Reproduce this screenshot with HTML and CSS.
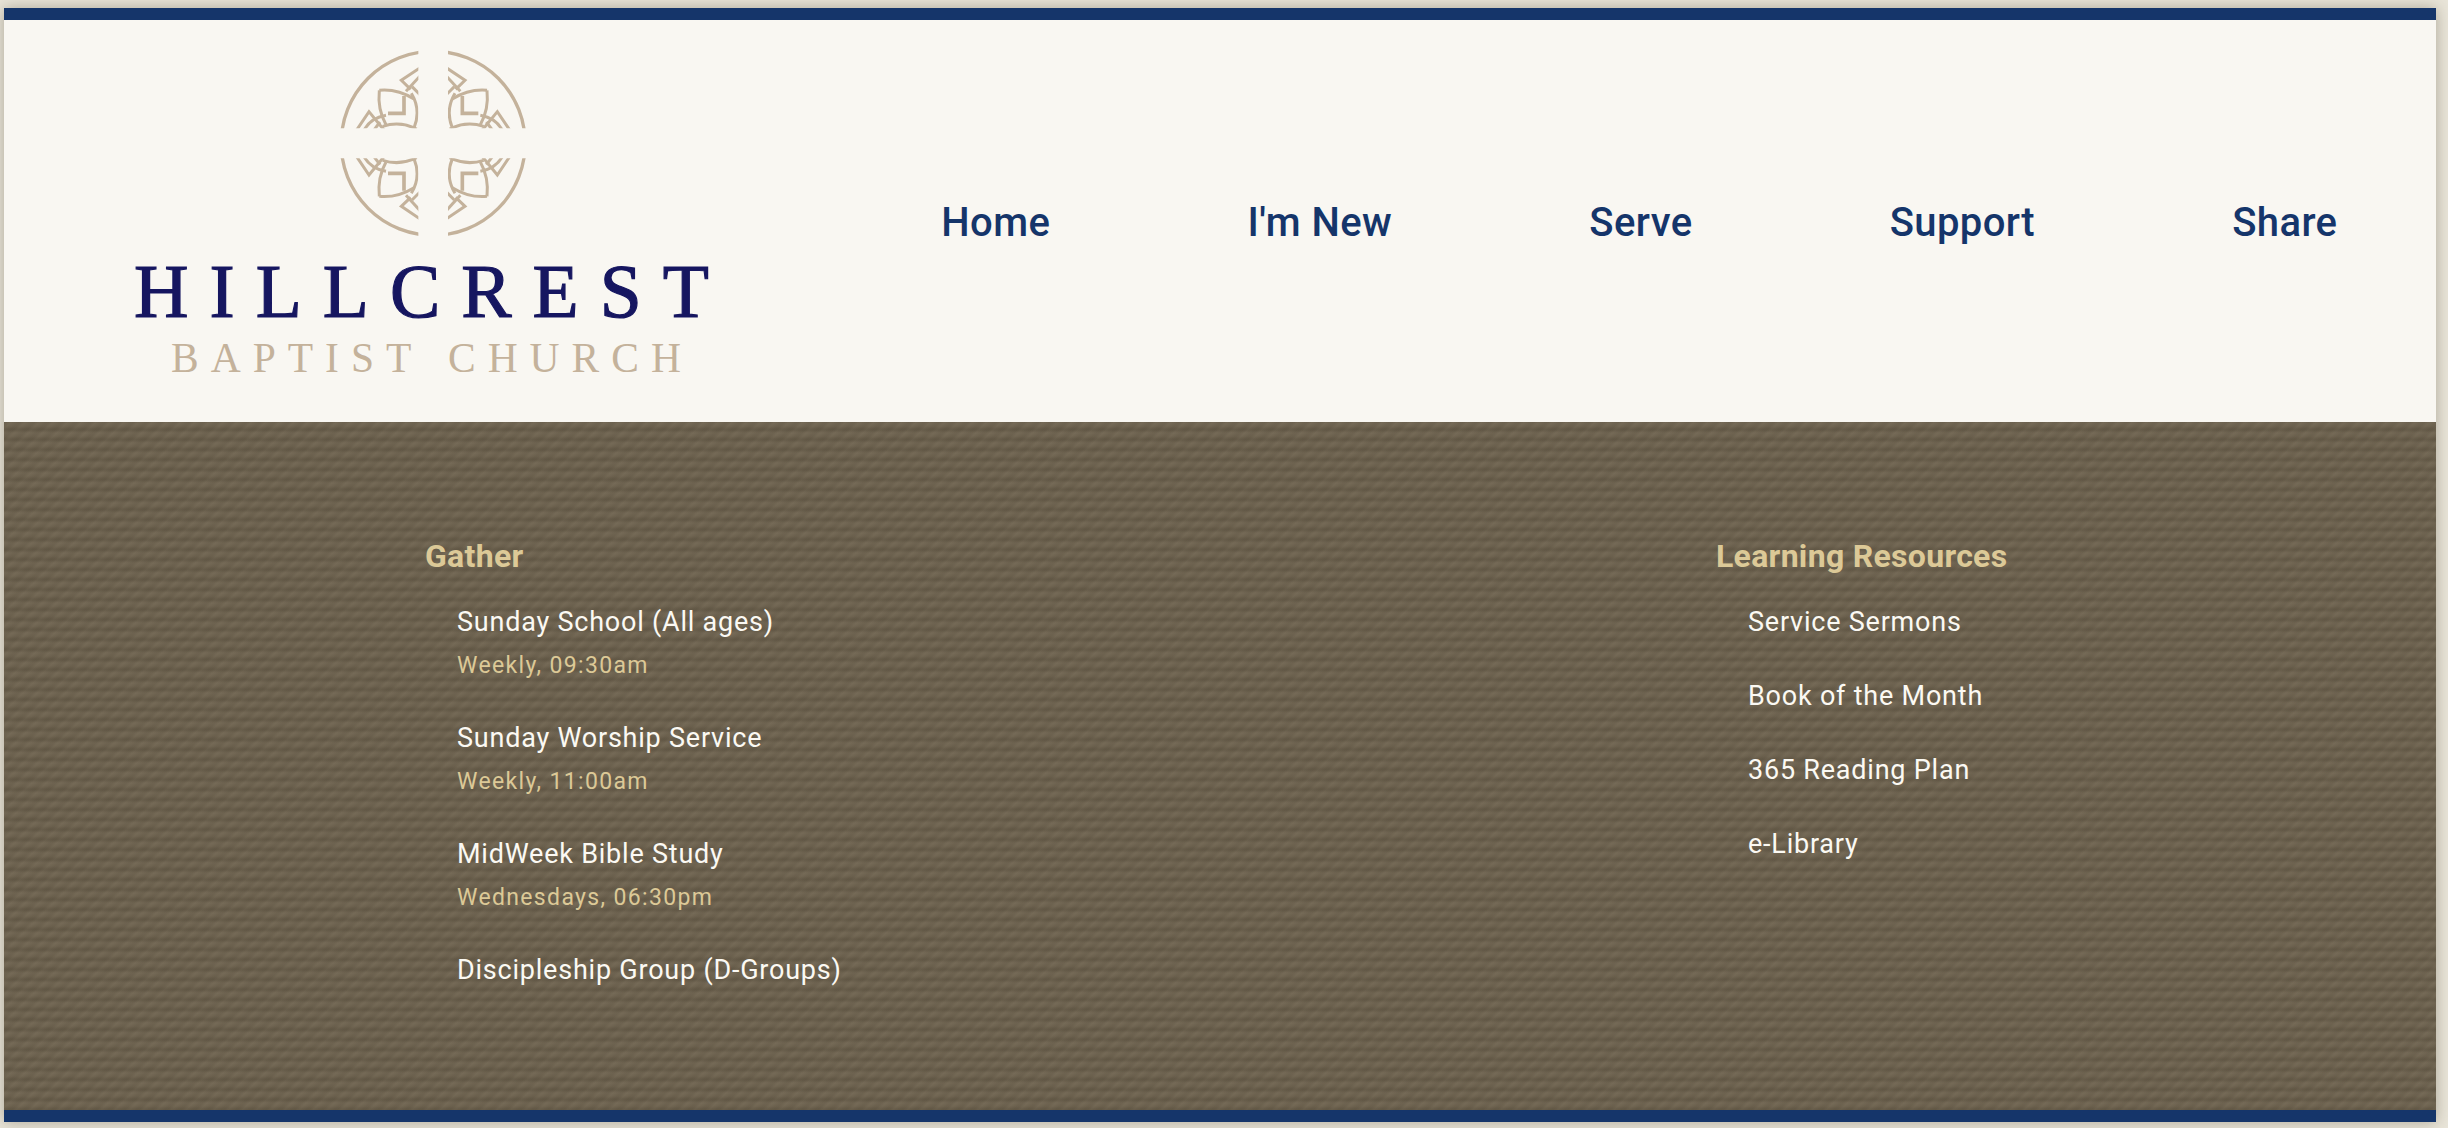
FILE: index.html
```html
<!DOCTYPE html>
<html lang="en">
<head>
<meta charset="utf-8">
<title>Hillcrest Baptist Church</title>
<link rel="stylesheet" href="styles.css">
</head>
<body>
<div class="frame">
  <header class="masthead">
    <a class="logo" href="#">
      <svg class="emblem" viewBox="0 0 840 660" width="280" height="220" aria-hidden="true">
        <defs>
          <clipPath id="q"><rect x="0" y="0" width="355" height="295"/></clipPath>
          <g id="quad" clip-path="url(#q)" fill="none" stroke="#c4b29b" stroke-width="9">
            <circle cx="399.5" cy="340" r="276" stroke-width="10"/>
            <path d="M238 181Q292 176 342 207"/>
            <path d="M238 181Q232 238 258 284"/>
            <path d="M312 198V250H264" stroke-width="11"/>
            <path d="M248 289Q300 272 350 297"/>
            <path d="M334 190Q364 240 342 294"/>
            <path d="M362 112L304 151L332 178"/>
            <path d="M362 136L318 184"/>
            <path d="M336 170L360 194"/>
            <path d="M170 300L207 245L252 300"/>
            <path d="M192 300Q212 264 258 256"/>
            <path d="M222 300L240 276"/>
          </g>
        </defs>
        <use href="#quad"/>
        <use href="#quad" transform="matrix(-1 0 0 1 799 0)"/>
        <use href="#quad" transform="matrix(1 0 0 -1 0 680)"/>
        <use href="#quad" transform="matrix(-1 0 0 -1 799 680)"/>
      </svg>
      <span class="logo-name">HILLCREST</span>
      <span class="logo-sub">BAPTIST CHURCH</span>
    </a>
    <nav class="nav">
      <a href="#">Home</a>
      <a href="#">I'm New</a>
      <a href="#">Serve</a>
      <a href="#">Support</a>
      <a href="#">Share</a>
    </nav>
  </header>
  <section class="lower">
    <div class="col">
      <h2>Gather</h2>
      <ul class="list list-events">
        <li><a href="#">Sunday School (All ages)</a><small>Weekly, 09:30am</small></li>
        <li><a href="#">Sunday Worship Service</a><small>Weekly, 11:00am</small></li>
        <li><a href="#">MidWeek Bible Study</a><small>Wednesdays, 06:30pm</small></li>
        <li><a href="#">Discipleship Group (D-Groups)</a></li>
      </ul>
    </div>
    <div class="col">
      <h2>Learning Resources</h2>
      <ul class="list list-links">
        <li><a href="#">Service Sermons</a></li>
        <li><a href="#">Book of the Month</a></li>
        <li><a href="#">365 Reading Plan</a></li>
        <li><a href="#">e-Library</a></li>
      </ul>
    </div>
  </section>
</div>
</body>
</html>
```
FILE: styles.css
```css
html, body { height: 100%; }
html { overflow: hidden; }
body {
  margin: 0;
  padding: 8px 12px 6px 4px;
  box-sizing: border-box;
  background: #e9e5d9;
  font-family: Roboto, sans-serif;
}
.frame {
  height: 1114px;
  display: flex;
  flex-direction: column;
  border-top: 12px solid #15356a;
  border-bottom: 12px solid #15356a;
  box-sizing: border-box;
  box-shadow: 0 0 14px rgba(60, 50, 30, .35);
}
.masthead {
  height: 402px;
  flex: none;
  display: flex;
  background: #f9f7f2;
}
.logo {
  display: flex;
  flex-direction: column;
  align-items: flex-start;
  padding: 10px 0 0 130px;
  font-family: "Liberation Serif", serif;
  text-decoration: none;
}
.emblem { display: block; margin: 0 0 4px 166px; }
.logo-name {
  font-size: 75.5px;
  line-height: 1;
  letter-spacing: 21px;
  color: #161660;
  -webkit-text-stroke: 1.2px #161660;
  white-space: nowrap;
}
.logo-sub {
  margin: 8px 0 0 37px;
  font-size: 41.5px;
  line-height: 1;
  letter-spacing: 12px;
  word-spacing: 3px;
  color: #c4b29b;
  white-space: nowrap;
}
.nav {
  margin-left: auto;
  display: flex;
  align-items: flex-start;
  padding-top: 177px;
}
.nav a {
  padding: 0 98.6px;
  font-size: 40px;
  font-weight: 500;
  line-height: 52px;
  letter-spacing: .4px;
  color: #15356a;
  text-decoration: none;
  white-space: nowrap;
}
.lower {
  flex: 1;
  display: grid;
  grid-template-columns: 1291px 1fr;
  padding: 110px 0 0 421px;
  background-color: #6e6350;
  background-image:
    repeating-linear-gradient(0deg, rgba(45, 38, 25, .13) 0, rgba(45, 38, 25, .13) 1px, rgba(255, 245, 220, .01) 4px, rgba(255, 245, 220, .03) 7px, rgba(45, 38, 25, .13) 10px),
    repeating-linear-gradient(135deg, rgba(45, 38, 25, .07) 0, rgba(45, 38, 25, .07) 2px, rgba(255, 245, 220, .02) 5px, rgba(45, 38, 25, .07) 10px);
}
h2 {
  margin: 0 0 20px;
  font-size: 32px;
  font-weight: 700;
  line-height: 48px;
  letter-spacing: .3px;
  color: #dcc997;
}
.list {
  margin: 0;
  padding: 0 0 0 32px;
  list-style: none;
}
.list a {
  display: block;
  font-size: 27px;
  font-weight: 400;
  line-height: 44px;
  letter-spacing: .78px;
  color: #fbf9f3;
  text-decoration: none;
}
.list small {
  display: block;
  font-size: 23px;
  line-height: 44px;
  letter-spacing: 1.35px;
  color: #dcc997;
}
.list-events li { margin-bottom: 28px; }
.list-links li { margin-bottom: 30px; }
```
